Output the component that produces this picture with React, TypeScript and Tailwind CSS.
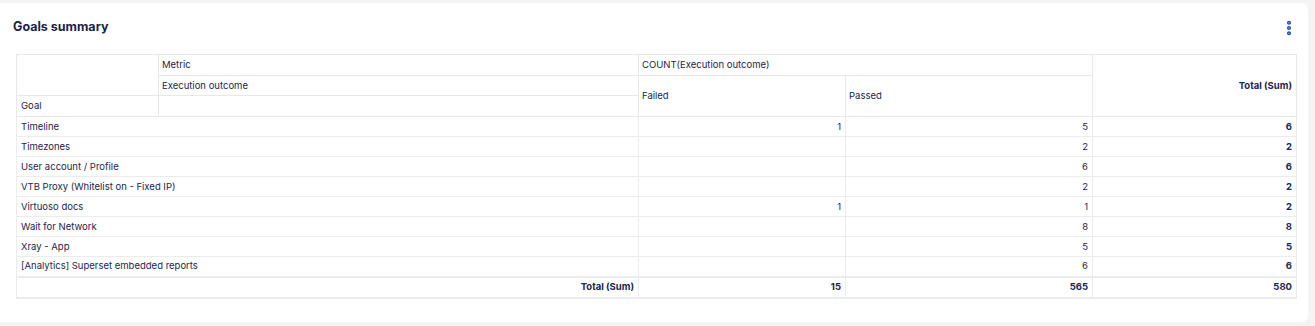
import { EllipsisVertical } from 'lucide-react';

const rows: [string, string, string, string][] = [
  ['Timeline', '1', '5', '6'],
  ['Timezones', '', '2', '2'],
  ['User account / Profile', '', '6', '6'],
  ['VTB Proxy (Whitelist on - Fixed IP)', '', '2', '2'],
  ['Virtuoso docs', '1', '1', '2'],
  ['Wait for Network', '', '8', '8'],
  ['Xray - App', '', '5', '5'],
  ['[Analytics] Superset embedded reports', '', '6', '6'],
];

const App = () => {
  return (
    <div className="w-[1315px] h-[326px] bg-[#f4f4f5] pt-[3px] font-['Inter',sans-serif]">
      <div className="w-[1308px] h-[319px] bg-white rounded-r-md flex flex-col">
        {/* Header */}
        <div className="flex items-center justify-between pl-[13px] pr-[10px] pt-[15px] h-[33px]">
          <h2 className="text-[12.5px] font-bold text-[#1c1f4a] leading-none">Goals summary</h2>
          <EllipsisVertical className="w-[18px] h-[18px] text-[#1f4fa8] mt-[2px]" strokeWidth={3.5} />
        </div>

        {/* Pivot table */}
        <div className="pl-4 pt-[18px]">
          <table className="w-[1280px] border-collapse text-[9.5px] text-[#22254d] leading-[12px] table-fixed">
            <colgroup>
              <col className="w-[142px]" />
              <col className="w-[480px]" />
              <col className="w-[207px]" />
              <col className="w-[247px]" />
              <col className="w-[204px]" />
            </colgroup>
            <thead>
              <tr className="h-[21px]">
                <th rowSpan={2} className="border border-[#e8e8ea]" />
                <th className="border border-[#e8e8ea] text-left font-normal px-[3px]">Metric</th>
                <th colSpan={2} className="border border-[#e8e8ea] text-left font-normal px-[3px]">COUNT(Execution outcome)</th>
                <th rowSpan={3} className="border border-[#e8e8ea] text-right font-bold px-[4px]">Total (Sum)</th>
              </tr>
              <tr className="h-[20px]">
                <th className="border border-[#e8e8ea] text-left font-normal px-[3px]">Execution outcome</th>
                <th rowSpan={2} className="border border-[#e8e8ea] text-left font-normal px-[3px]">Failed</th>
                <th rowSpan={2} className="border border-[#e8e8ea] text-left font-normal px-[3px]">Passed</th>
              </tr>
              <tr className="h-[21px]">
                <th className="border border-[#e8e8ea] text-left font-normal px-[4px]">Goal</th>
                <th className="border border-[#e8e8ea]" />
              </tr>
            </thead>
            <tbody>
              {rows.map(([goal, failed, passed, total]) => (
                <tr key={goal} className="h-[20px]">
                  <td colSpan={2} className="border border-[#ececee] px-[4px]">{goal}</td>
                  <td className="border border-[#ececee] px-[4px] text-right">{failed}</td>
                  <td className="border border-[#ececee] px-[4px] text-right">{passed}</td>
                  <td className="border border-[#ececee] px-[4px] text-right font-bold">{total}</td>
                </tr>
              ))}
              <tr className="h-[21px] font-bold">
                <td colSpan={2} className="border border-[#ececee] border-t-2 border-b-2 px-[4px] text-right">Total (Sum)</td>
                <td className="border border-[#ececee] border-t-2 border-b-2 px-[4px] text-right">15</td>
                <td className="border border-[#ececee] border-t-2 border-b-2 px-[4px] text-right">565</td>
                <td className="border border-[#ececee] border-t-2 border-b-2 px-[4px] text-right">580</td>
              </tr>
            </tbody>
          </table>
        </div>
      </div>
    </div>
  );
};

export default App;
